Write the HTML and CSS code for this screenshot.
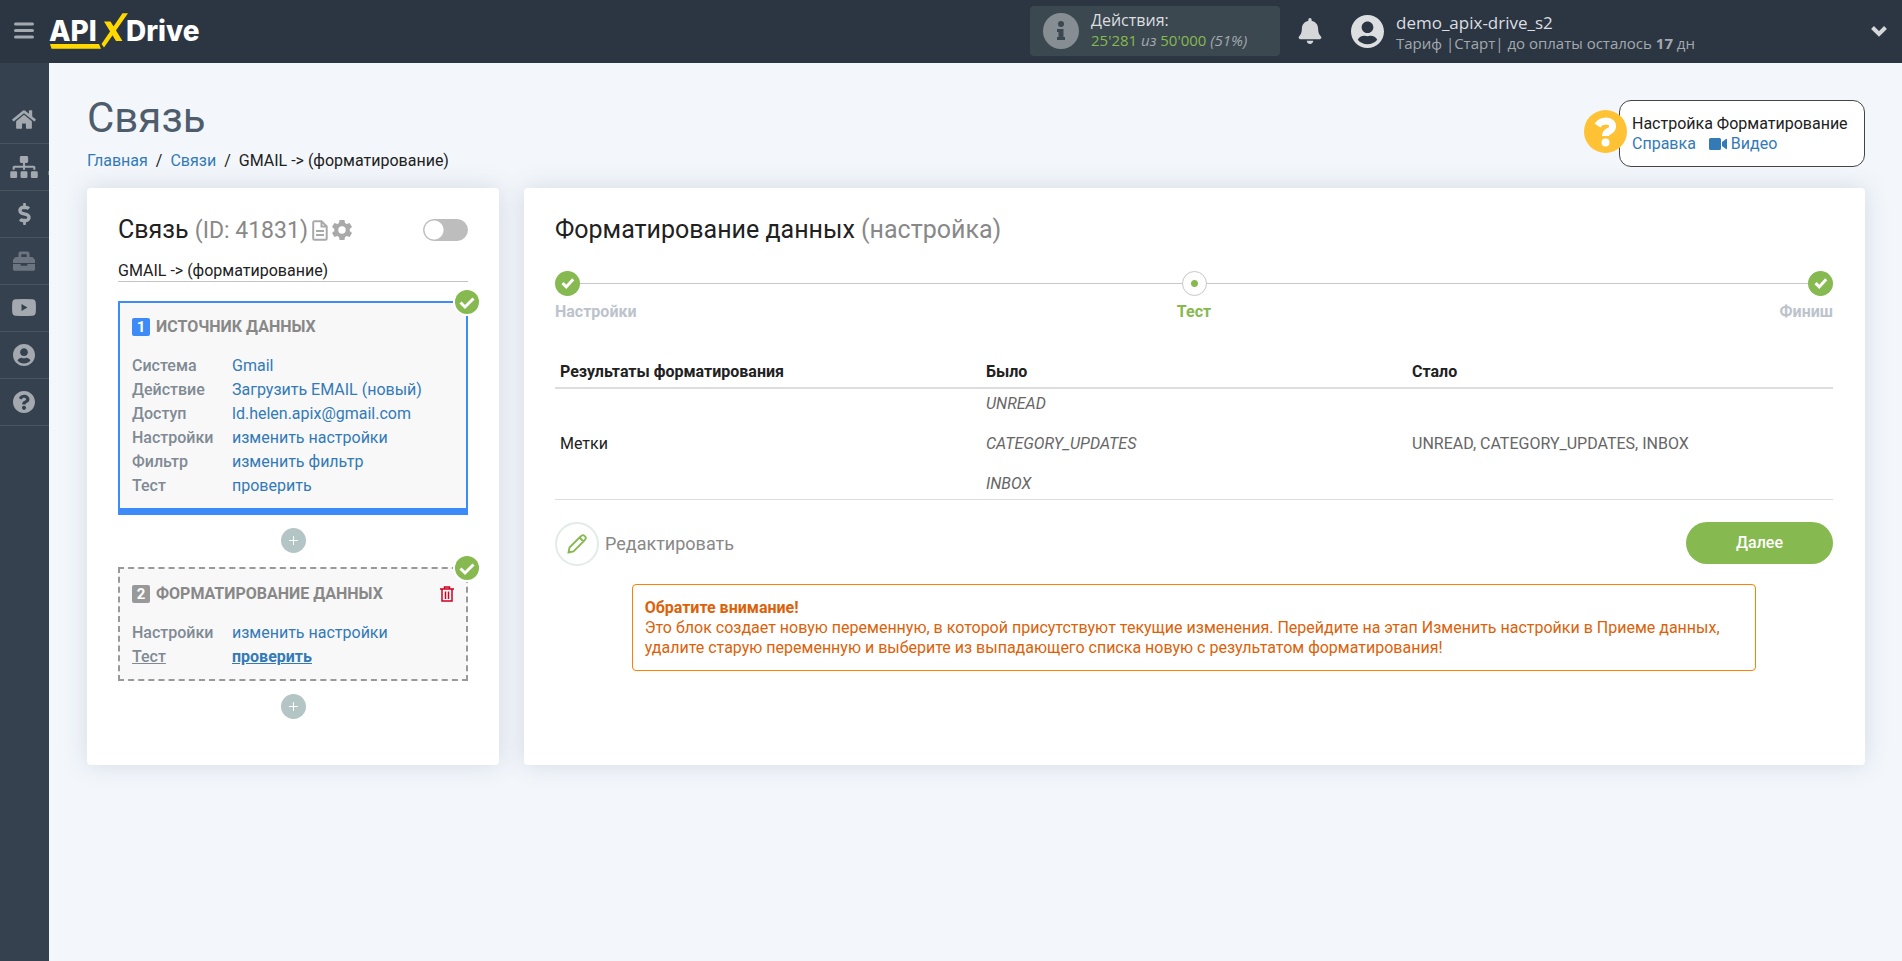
FILE: index.html
```html
<!DOCTYPE html>
<html lang="ru">
<head>
<meta charset="utf-8">
<title>Связь – APIXDrive</title>
<link rel="stylesheet" href="styles.css">
</head>
<body>
<header class="topbar">
  <button class="menu-btn" type="button" aria-label="Меню">
    <svg width="20" height="17" viewBox="0 0 20 17"><path d="M1.500 2h17M1.500 8.500h17M1.500 15h17" stroke="#a3a9ae" stroke-width="3" stroke-linecap="round"/></svg>
  </button>
  <a class="logo" href="#" aria-label="APIXDrive">
    <svg width="156" height="36" viewBox="0 0 156 36">
      <g class="logo-text"><text x="0" y="28">API</text><text x="77" y="28">Drive</text></g>
      <path d="M1 31h49l2 4.700H2.500zM55 8.500h6.500l12 19.500H67zM73.500.3H79L55 34.500 52.500 31z" fill="#ffd800"/>
    </svg>
  </a>
  <div class="usage">
    <svg width="36" height="36" viewBox="0 0 36 36"><circle cx="18" cy="18" r="18" fill="#868e94"/><g fill="#3b484f"><circle cx="18" cy="11" r="3"/><path d="M14 16h6.500v8H22v3h-8v-3h1.500v-5H14z"/></g></svg>
    <div class="usage-text">
      <div class="usage-title">Действия:</div>
      <div class="usage-count"><b>25'281</b> <i>из</i> <b>50'000</b> <i>(51%)</i></div>
    </div>
  </div>
  <button class="bell" type="button" aria-label="Уведомления">
    <svg width="24" height="26" viewBox="0 0 448 512"><path fill="#d5d7d9" d="M224 512c35.320 0 63.970-28.650 63.970-64H160.030c0 35.350 28.650 64 63.970 64zm215.390-149.710c-19.320-20.760-55.470-51.990-55.470-154.290 0-77.700-54.480-139.900-127.940-155.160V32c0-17.670-14.320-32-31.980-32s-31.980 14.330-31.980 32v20.840C118.560 68.100 64.080 130.300 64.080 208c0 102.300-36.150 133.530-55.470 154.290-6 6.450-8.660 14.160-8.610 21.710.11 16.400 12.980 32 32.100 32h383.800c19.120 0 32-15.600 32.100-32 .05-7.550-2.610-15.270-8.610-21.710z"/></svg>
  </button>
  <div class="account">
    <svg width="33" height="33" viewBox="0 0 496 496"><path fill="#dcdee0" d="M248 0C111 0 0 111 0 248s111 248 248 248 248-111 248-248S385 0 248 0zm0 96c48.600 0 88 39.400 88 88s-39.400 88-88 88-88-39.400-88-88 39.400-88 88-88zm0 344c-58.700 0-111.300-26.600-146.500-68.200 18.800-35.400 55.600-59.800 98.500-59.800 2.400 0 4.800.4 7.100 1.100 13 4.200 26.600 6.900 40.900 6.900s28-2.700 40.900-6.900c2.300-.7 4.700-1.100 7.100-1.100 42.900 0 79.700 24.400 98.500 59.800C359.300 413.400 306.700 440 248 440z"/></svg>
    <div class="account-text">
      <div class="account-name">demo_apix-drive_s2</div>
      <div class="account-plan">Тариф |Старт| до оплаты осталось <b>17</b> дн</div>
    </div>
  </div>
  <button class="expand" type="button" aria-label="Развернуть">
    <svg width="18" height="12" viewBox="0 0 18 12"><path d="M2.500 2.500L9 9l6.500-6.500" fill="none" stroke="#d5d7d9" stroke-width="4"/></svg>
  </button>
</header>
<div class="shell">
  <nav class="sidebar">
    <a href="#" aria-label="Главная"><svg width="24" height="21" viewBox="0 0 576 512"><path d="M280.370 148.260L96 300.110V464a16 16 0 0 0 16 16l112.060-.29a16 16 0 0 0 15.920-16V368a16 16 0 0 1 16-16h64a16 16 0 0 1 16 16v95.640a16 16 0 0 0 16 16.050L464 480a16 16 0 0 0 16-16V300L295.670 148.260a12.190 12.190 0 0 0-15.300 0zM571.600 251.470L488 182.560V44.050a12 12 0 0 0-12-12h-56a12 12 0 0 0-12 12v72.610L318.470 43a48 48 0 0 0-61 0L4.340 251.470a12 12 0 0 0-1.600 16.900l25.500 31A12 12 0 0 0 45.150 301l235.220-193.740a12.190 12.190 0 0 1 15.300 0L530.900 301a12 12 0 0 0 16.900-1.600l25.500-31a12 12 0 0 0-1.700-16.930z"/></svg></a>
    <a href="#" class="has-sub" aria-label="Связи"><svg width="28" height="22" viewBox="0 0 640 512"><path d="M128 352H32c-17.670 0-32 14.330-32 32v96c0 17.670 14.330 32 32 32h96c17.670 0 32-14.330 32-32v-96c0-17.670-14.330-32-32-32zm-24-80h192v48h48v-48h192v48h48v-57.590c0-21.170-17.230-38.410-38.410-38.410H344v-64h40c17.670 0 32-14.330 32-32V32c0-17.670-14.330-32-32-32H256c-17.670 0-32 14.330-32 32v96c0 17.670 14.330 32 32 32h40v64H94.410C73.230 224 56 241.230 56 262.410V320h48v-48zm264 80h-96c-17.670 0-32 14.330-32 32v96c0 17.670 14.330 32 32 32h96c17.670 0 32-14.330 32-32v-96c0-17.670-14.330-32-32-32zm240 0h-96c-17.670 0-32 14.330-32 32v96c0 17.670 14.330 32 32 32h96c17.670 0 32-14.330 32-32v-96c0-17.670-14.330-32-32-32z"/></svg></a>
    <a href="#" aria-label="Оплата"><svg width="13" height="22" viewBox="0 0 288 512"><path d="M209.200 233.400l-108-31.600C88.700 198.200 80 186.500 80 173.500c0-16.300 13.200-29.500 29.500-29.500h66.300c12.200 0 24.200 3.700 34.200 10.500 6.100 4.100 14.300 3.100 19.500-2l34.800-34c7.100-6.900 6.100-18.400-1.800-24.500C238 74.800 207.400 64.100 176 64V16c0-8.800-7.200-16-16-16h-32c-8.800 0-16 7.200-16 16v48h-2.500C45.800 64-5.400 118.700.5 183.600c4.200 46.100 39.400 83.600 83.800 96.600l102.500 30c12.500 3.700 21.200 15.300 21.200 28.300 0 16.300-13.200 29.500-29.500 29.500h-66.300C100 368 88 364.300 78 357.500c-6.100-4.100-14.300-3.100-19.500 2l-34.800 34c-7.100 6.900-6.100 18.400 1.800 24.500 24.500 19.200 55.100 29.900 86.500 30v48c0 8.800 7.200 16 16 16h32c8.800 0 16-7.200 16-16v-48.200c46.600-.9 90.300-28.600 105.700-72.700 21.500-61.600-14.600-124.800-72.500-141.700z"/></svg></a>
    <a href="#" class="dim" aria-label="Проекты"><svg width="22" height="22" viewBox="0 0 512 512"><path d="M502.630 214.630l-45.250-45.250c-6-6-14.140-9.380-22.630-9.380H384V80c0-26.510-21.490-48-48-48H176c-26.510 0-48 21.490-48 48v80H77.250c-8.490 0-16.620 3.370-22.630 9.380L9.370 214.630c-6 6-9.370 14.140-9.370 22.620V304h512v-66.750c0-8.480-3.370-16.620-9.370-22.620zM320 160H192V96h128v64zM336 328v40h-160v-40H0v120c0 17.670 14.330 32 32 32h448c17.670 0 32-14.330 32-32V328z"/></svg></a>
    <a href="#" aria-label="Видео"><svg width="24" height="17" viewBox="0 0 24 17"><path fill-rule="evenodd" d="M3.500.3Q12-.3 20.500.3q3 .3 3.200 3.200.5 5 0 10-.2 2.900-3.200 3.200-8.500.6-17 0-3-.3-3.200-3.200-.5-5 0-10Q.5.600 3.500.3zM9.500 5v7l6-3.500z"/></svg></a>
    <a href="#" aria-label="Профиль"><svg width="22" height="22" viewBox="0 0 496 496"><path d="M248 0C111 0 0 111 0 248s111 248 248 248 248-111 248-248S385 0 248 0zm0 96c48.600 0 88 39.400 88 88s-39.400 88-88 88-88-39.400-88-88 39.400-88 88-88zm0 344c-58.700 0-111.300-26.600-146.500-68.200 18.800-35.400 55.600-59.800 98.500-59.800 2.400 0 4.800.4 7.100 1.100 13 4.200 26.600 6.900 40.900 6.900s28-2.700 40.900-6.900c2.300-.7 4.700-1.100 7.100-1.100 42.900 0 79.700 24.400 98.500 59.800C359.300 413.400 306.700 440 248 440z"/></svg></a>
    <a href="#" aria-label="Помощь"><svg width="22" height="22" viewBox="8 8 496 496"><path d="M504 256c0 136.997-111.043 248-248 248S8 392.997 8 256C8 119.083 119.043 8 256 8s248 111.083 248 248zM262.655 90c-54.497 0-89.255 22.957-116.549 63.758-3.536 5.286-2.353 12.415 2.715 16.258l34.699 26.310c5.205 3.947 12.621 3.008 16.665-2.122 17.864-22.658 30.113-35.797 57.303-35.797 20.429 0 45.698 13.148 45.698 32.958 0 14.976-12.363 22.667-32.534 33.976C247.128 238.528 216 254.941 216 296v4c0 6.627 5.373 12 12 12h56c6.627 0 12-5.373 12-12v-1.333c0-28.462 83.186-29.647 83.186-106.667 0-58.002-60.165-102-116.531-102zM256 338c-25.365 0-46 20.635-46 46 0 25.364 20.635 46 46 46s46-20.636 46-46c0-25.365-20.635-46-46-46z"/></svg></a>
  </nav>
  <main class="content">
    <div class="page-head">
      <div>
        <h1>Связь</h1>
        <nav class="crumbs"><a href="#">Главная</a><span>/</span><a href="#">Связи</a><span>/</span>GMAIL -&gt; (форматирование)</nav>
      </div>
      <aside class="help">
        <svg class="help-icon" width="43" height="43" viewBox="0 0 43 43"><circle cx="21.500" cy="21.500" r="21.500" fill="#ffc235"/><path d="M13.500 15.500q3-4.500 8.500-4.500 7 .5 6.500 6-.5 3-4 4.500-3 1.500-3 4.500" fill="none" stroke="#fff" stroke-width="7"/><circle cx="21.500" cy="32.500" r="4" fill="#fff"/></svg>
        <div>Настройка Форматирование</div>
        <div class="help-links"><a href="#">Справка</a><a href="#"><svg width="18" height="12" viewBox="0 0 18 12"><path fill="#337ab7" d="M1.500 0h9Q12 0 12 1.500v9q0 1.500-1.500 1.500h-9Q0 12 0 10.500v-9Q0 0 1.500 0zM13 4l4-3q1-.5 1 .5v9q0 1-1 .5l-4-3z"/></svg> Видео</a></div>
      </aside>
    </div>
    <div class="columns">
      <section class="card flow">
        <div class="flow-head">
          <h2>Связь <span class="muted flow-id">(ID: 41831)</span></h2>
          <svg width="16" height="21" viewBox="0 0 16 21"><path d="M2.500 1.200h7l5.200 5.200V18.500q0 1.300-1.300 1.300H2.500q-1.300 0-1.300-1.300v-16q0-1.300 1.300-1.300zM9.500 1.500v5h5M4 11h8M4 15h8" fill="none" stroke="#a9a9a9" stroke-width="2"/></svg>
          <svg width="20" height="20" viewBox="0 0 20 20"><path fill="#a9a9a9" fill-rule="evenodd" d="M7.500 0h5l.5 3 1.800 1 2.800-1.100L20 7l-2.300 1.900v2.200L20 13l-2.400 4.100L14.800 16l-1.800 1-.5 3h-5L7 17l-1.800-1-2.800 1.100L0 13l2.300-1.900V8.900L0 7l2.400-4.100L5.200 4 7 3zM10 6.300a3.700 3.700 0 1 0 0 7.400 3.700 3.700 0 0 0 0-7.400z"/></svg>
          <input class="switch" type="checkbox" aria-label="Включить связь">
        </div>
        <div class="flow-name">GMAIL -&gt; (форматирование)</div>
        <article class="step step-source">
          <svg class="step-ok" width="28" height="28" viewBox="0 0 28 28"><circle cx="14" cy="14" r="14" fill="#fff"/><circle cx="14" cy="14" r="12" fill="#86b94f"/><path d="M7.500 14.500l4.500 4.500 8.500-8.500" fill="none" stroke="#fff" stroke-width="3"/></svg>
          <h3><span class="num">1</span>ИСТОЧНИК ДАННЫХ</h3>
          <dl>
            <dt>Система</dt><dd><a href="#">Gmail</a></dd>
            <dt>Действие</dt><dd><a href="#">Загрузить EMAIL (новый)</a></dd>
            <dt>Доступ</dt><dd><a href="#">ld.helen.apix@gmail.com</a></dd>
            <dt>Настройки</dt><dd><a href="#">изменить настройки</a></dd>
            <dt>Фильтр</dt><dd><a href="#">изменить фильтр</a></dd>
            <dt>Тест</dt><dd><a href="#">проверить</a></dd>
          </dl>
        </article>
        <button class="add" type="button" aria-label="Добавить"><svg width="9" height="9" viewBox="0 0 9 9"><path d="M4.500 0v9M0 4.500h9" stroke="#fff"/></svg></button>
        <article class="step step-format">
          <svg class="step-ok" width="28" height="28" viewBox="0 0 28 28"><circle cx="14" cy="14" r="14" fill="#fff"/><circle cx="14" cy="14" r="12" fill="#86b94f"/><path d="M7.500 14.500l4.500 4.500 8.500-8.500" fill="none" stroke="#fff" stroke-width="3"/></svg>
          <h3><span class="num">2</span>ФОРМАТИРОВАНИЕ ДАННЫХ
            <button class="trash" type="button" aria-label="Удалить"><svg width="14" height="16" viewBox="0 0 14 16"><path d="M0 3h14M4.500 2.500V1h5v1.500M2 3v12h10V3M5.500 5.500v7.500M8.500 5.500v7.500" fill="none" stroke="#cf0020" stroke-width="1.500"/></svg></button></h3>
          <dl>
            <dt>Настройки</dt><dd><a href="#">изменить настройки</a></dd>
            <dt class="current">Тест</dt><dd class="current"><a href="#">проверить</a></dd>
          </dl>
        </article>
        <button class="add" type="button" aria-label="Добавить"><svg width="9" height="9" viewBox="0 0 9 9"><path d="M4.500 0v9M0 4.500h9" stroke="#fff"/></svg></button>
      </section>
      <section class="card work">
        <h2>Форматирование данных <span class="muted">(настройка)</span></h2>
        <ol class="wizard">
          <li><span class="dot done"><svg width="14" height="12" viewBox="0 0 12 10"><path d="M1.300 4.300L4.500 7.500l6-6.500" fill="none" stroke="#fff" stroke-width="2.600"/></svg></span>Настройки</li>
          <li class="active"><span class="dot"></span>Тест</li>
          <li><span class="dot done"><svg width="14" height="12" viewBox="0 0 12 10"><path d="M1.300 4.300L4.500 7.500l6-6.500" fill="none" stroke="#fff" stroke-width="2.600"/></svg></span>Финиш</li>
        </ol>
        <table>
          <thead><tr><th>Результаты форматирования</th><th>Было</th><th>Стало</th></tr></thead>
          <tbody><tr><td>Метки</td><td class="was">UNREAD<br><br>CATEGORY_UPDATES<br><br>INBOX</td><td class="now">UNREAD, CATEGORY_UPDATES, INBOX</td></tr></tbody>
        </table>
        <div class="actions">
          <button class="edit" type="button"><span class="edit-ring"><svg width="20" height="20" viewBox="0 0 20 20"><path d="M1.500 18.500l1-5L13 3l2-1.500q1.200-.8 2.200.2l1.200 1.200q.9 1 .1 2L17 7 6.500 17.500zM12.500 3.500l4 4" fill="none" stroke="#86b94f" stroke-width="1.800"/></svg></span>Редактировать</button>
          <button class="next" type="button">Далее</button>
        </div>
        <div class="notice"><b>Обратите внимание!</b><br>Это блок создает новую переменную, в которой присутствуют текущие изменения. Перейдите на этап Изменить настройки в Приеме данных, удалите старую переменную и выберите из выпадающего списка новую с результатом форматирования!</div>
      </section>
    </div>
  </main>
</div>
</body>
</html>
```
FILE: styles.css
```css
* { box-sizing: border-box; }
body {
  margin: 0;
  min-height: 100vh;
  display: flex;
  flex-direction: column;
  background: #f3f7fc;
  color: #212121;
  font: 16px/20px Roboto, sans-serif;
}
a { color: #337ab7; text-decoration: none; }
button { border: 0; padding: 0; background: none; font: inherit; color: inherit; cursor: pointer; }
svg { display: block; flex: none; }
h1, h2, h3, dl, dd, ol { margin: 0; padding: 0; font-weight: 400; }

.topbar {
  display: flex;
  align-items: center;
  height: 63px;
  padding: 0 14px 1px 0;
  background: #2b3642;
  font-family: "Open Sans", sans-serif;
}
.menu-btn { width: 49px; padding: 0 1px 2px 0; display: flex; justify-content: center; }
.logo-text { font: 800 28px Inter, sans-serif; fill: #fff; }
.usage {
  display: flex;
  align-items: center;
  gap: 12px;
  width: 250px;
  height: 50px;
  margin-left: auto;
  padding-left: 13px;
  border-radius: 4px;
  background: #3b484f;
}
.usage-text { padding-bottom: 2px; font-size: 15px; line-height: 20px; white-space: nowrap; }
.usage-title { font-size: 16px; color: #dcdee0; }
.usage-count { color: #a3a9ae; }
.usage-count b { font-weight: 400; color: #86b94f; }
.bell { margin-left: 18px; }
.account { display: flex; align-items: center; gap: 12px; width: 502px; margin-left: 29px; white-space: nowrap; }
.account-text { padding-top: 4px; }
.account-name { font-size: 17px; line-height: 20px; color: #dcdee0; }
.account-plan { font-size: 15px; line-height: 20px; color: #a3a9ae; }
.expand { margin-left: 17px; }

.shell { flex: 1; display: flex; }
.sidebar { width: 49px; flex: none; padding-top: 34px; background: #364150; }
.sidebar a {
  position: relative;
  display: flex;
  align-items: center;
  justify-content: center;
  height: 47px;
  padding: 0 1px 1px 0;
  border-bottom: 1px solid #485560;
  fill: #a3a9ae;
}
.sidebar .dim { fill: #6c757f; }
.has-sub::after {
  content: "";
  position: absolute;
  right: 0;
  top: 27px;
  width: 1px;
  height: 4px;
  background: #6c757f;
}

.content { flex: 1; min-width: 0; padding: 37px 37px 40px 38px; }
.page-head { display: flex; justify-content: space-between; align-items: flex-start; height: 88px; }
h1 { padding-top: 2px; font-size: 42px; line-height: 32px; color: #4e5d6c; }
.crumbs { margin-top: 17px; }
.crumbs span { margin: 0 8px; }
.help {
  position: relative;
  min-width: 246px;
  padding: 13px 13px 12px 12px;
  border: 1px solid #444;
  border-radius: 12px;
  background: #fff;
}
.help-icon { position: absolute; left: -36px; top: 9px; }
.help-links { display: flex; gap: 13px; }
.help-links a { display: flex; align-items: center; gap: 4px; }

.columns { display: flex; gap: 25px; }
.card { border-radius: 4px; background: #fff; box-shadow: 0 0 24px rgba(80, 90, 105, .18); padding: 31px 31px 32px; }
.flow { flex: 0 0 412px; }
.work { flex: 1; min-width: 0; padding-right: 32px; }
h2 { height: 22px; font-size: 25px; line-height: 22px; }
.muted { color: #888; }
.flow-id { font-size: 23px; }
.flow-head { display: flex; align-items: center; gap: 4px; }
.switch {
  appearance: none;
  width: 45px;
  height: 22px;
  margin: 0 0 0 auto;
  border: 1px solid #bdbdbd;
  border-radius: 11px;
  background: radial-gradient(circle at 10px 10px, #fff 9px, #bdbdbd 10px);
}
.flow-name { margin: 20px 0 19px; border-bottom: 1px solid #c4c4c4; }
.step { position: relative; padding: 14px 12px 10px; background: #f8f8f8; border: 2px solid #3d8bf8; }
.step-source { border-bottom-width: 7px; }
.step-format { padding-top: 15px; border: 2px dashed #999; }
.step-ok { position: absolute; right: -15px; top: -15px; }
h3 { display: flex; align-items: center; height: 20px; margin-bottom: 17px; font-size: 16px; font-weight: 700; color: #888; }
.num {
  width: 18px;
  height: 18px;
  margin-right: 6px;
  border-radius: 2px;
  background: #3d8bf8;
  color: #fff;
  font-size: 15px;
  line-height: 18px;
  text-align: center;
}
.step-format .num { background: #999; }
.trash { margin-left: auto; }
dl { display: grid; grid-template-columns: 100px 1fr; line-height: 24px; }
dt { font-weight: 500; color: #808a94; }
dt.current { text-decoration: underline; }
dd.current a { font-weight: 700; text-decoration: underline; }
.add {
  display: flex;
  align-items: center;
  justify-content: center;
  width: 25px;
  height: 25px;
  margin: 13px auto 14px;
  border-radius: 50%;
  background: #b4c5c5;
}

.wizard {
  display: flex;
  justify-content: space-between;
  margin-top: 30px;
  list-style: none;
  font-weight: 700;
  color: #bcc3cc;
  background: linear-gradient(#c8c8c8, #c8c8c8) 0 12px / 100% 1px no-repeat;
}
.wizard li { width: 90px; display: flex; flex-direction: column; gap: 6px; }
.wizard .active { align-items: center; color: #86b94f; }
.wizard li:last-child { align-items: flex-end; }
.dot {
  display: flex;
  align-items: center;
  justify-content: center;
  width: 25px;
  height: 25px;
  border-radius: 50%;
  border: 1px solid #c8c8c8;
  background: radial-gradient(circle, #86b94f 3px, #fff 4px);
}
.dot.done { border: 0; background: #86b94f; }

table { width: 100%; margin-top: 35px; border-collapse: collapse; table-layout: fixed; }
th { padding: 5px; text-align: left; border-bottom: 2px solid #ddd; }
td { padding: 5px; border-bottom: 1px solid #ddd; }
.was, .now { color: #666; }
.was { font-style: italic; }

.actions { display: flex; align-items: flex-start; justify-content: space-between; margin-top: 22px; }
.edit { display: flex; align-items: center; gap: 6px; font-size: 18px; color: #888; }
.edit-ring {
  display: flex;
  align-items: center;
  justify-content: center;
  width: 44px;
  height: 44px;
  border: 2px solid #e2ebe8;
  border-radius: 50%;
}
.next { width: 147px; height: 42px; border-radius: 21px; background: #86b94f; color: #fff; font-weight: 500; }
.notice {
  width: 88%;
  margin: 18px auto 0;
  padding: 13px 12px 12px;
  border: 1px solid #ff8000;
  border-radius: 4px;
  color: #dc6209;
}
```
